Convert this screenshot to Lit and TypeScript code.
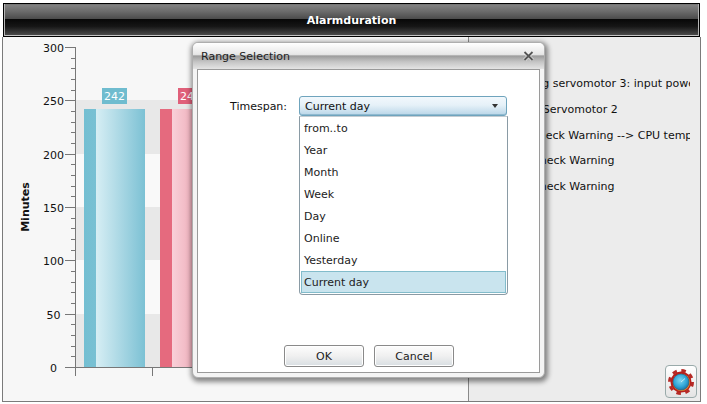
import { LitElement, html, css, svg } from "lit";
import { customElement } from "lit/decorators.js";

const items = ["from..to", "Year", "Month", "Week", "Day", "Online", "Yesterday", "Current day"];
const rows = [
  { text: "Warning servomotor 3: input power", indent: 10 },
  { text: "Warning Servomotor 2", indent: 0 },
  { text: "Check Warning --> CPU temperature", indent: 37 },
  { text: "Check Warning", indent: 38 },
  { text: "Check Warning", indent: 38 },
];
const y0 = 367;
const unit = 320 / 300;
const yOf = (v: number) => y0 - v * unit;

@customElement("app-root")
export class AppRoot extends LitElement {
  static styles = css`
    :host { display: block; position: relative; width: 707px; height: 404px; background: #fff; overflow: hidden; font-family: "DejaVu Sans", Verdana, sans-serif; font-size: 11px; color: #111; }
    .frame { display: flex; flex-direction: column; width: 699px; height: 399px; margin: 3px 0 0 2px; }
    .header { height: 34px; margin-left: 1px; width: 697px; box-sizing: border-box; border: 1px solid #000; box-shadow: inset 1px 0 0 #b4b4b4, inset -1px 0 0 #b4b4b4, inset 0 -1px 0 #c4c4c4, inset 0 1px 0 #777;
      background: linear-gradient(#858585 0, #6a6a6a 24%, #4c4c4c 46%, #080808 48%, #161616 70%, #505050 100%);
      display: flex; align-items: center; justify-content: center; color: #fff; font-weight: bold; font-size: 11px; flex: none; }
    .body { flex: 1; display: flex; border: 1px solid #7b7b7b; border-top: 0; min-height: 0; }
    .chart { width: 465px; background: #f7f7f7; border-right: 1px solid #8a8a8a; }
    .chart svg { display: block; }
    .chart text { font-family: "DejaVu Sans", Verdana, sans-serif; font-size: 11px; fill: #111; }
    .chart .lbl { fill: #fff; font-size: 11px; }
    .chart .axt { font-weight: bold; }
    .side { flex: 1; min-width: 0; background: #ececec; padding: 34px 10px 0 0; position: relative; }
    .side-list { margin-left: 25px; overflow: hidden; }
    .side-row { height: 25.75px; line-height: 25.75px; white-space: nowrap; font-size: 11px; color: #111; }
    .gear { position: absolute; right: 3px; bottom: 3px; width: 30px; height: 31px; border: 1px solid #9aa; border-radius: 4px; background: linear-gradient(#fff, #e4e4e4); display: flex; align-items: center; justify-content: center; }
    .dialog { position: absolute; left: 192px; top: 42px; width: 353px; height: 336px; box-sizing: border-box; display: flex; flex-direction: column;
      border: 1px solid #aeaeae; border-radius: 6px; padding: 0 4px 4px; background: #f4f4f4;
      box-shadow: 1px 2px 5px 2px rgba(0,0,0,.45); }
    .title { height: 26px; flex: none; margin: 0 -4px; padding: 0 10px 0 8px; display: flex; justify-content: space-between; align-items: center; color: #222; font-size: 11px;
      background: linear-gradient(#fff 0, #e6e6e6 44%, #9c9c9c 50%, #c4c4c4 72%, #e4e4e4 100%); border-radius: 5px 5px 0 0; }
    .close { display: block; }
    .content { flex: 1; background: #fff; border: 1px solid #9a9a9a; position: relative; display: flex; flex-direction: column; justify-content: space-between; padding: 26px 0 5px; min-height: 0; }
    .field { display: flex; align-items: center; gap: 12px; margin-left: 32px; height: 20px; }
    .combo { width: 208px; height: 20px; box-sizing: border-box; border: 1px solid #6fa4bd; border-radius: 3px; background: linear-gradient(#f2f8fc, #e6f1f8 45%, #b9d6e8); display: flex; align-items: center; justify-content: space-between; padding: 0 8px 0 5px; box-shadow: inset 0 -1px 0 #8fb9d0; color: #111; }
    .arrow { width: 0; height: 0; border: 3.5px solid transparent; border-top: 4px solid #333; border-bottom: 0; }
    .menu { position: absolute; left: 101px; top: 46px; width: 209px; height: 179px; box-sizing: border-box; border: 1px solid #8a9ba5; border-top-color: #c4ccd2; border-radius: 0 0 4px 4px; background: #fff; padding: 1px; }
    .item { height: 22px; line-height: 22px; padding-left: 3px; color: #222; box-sizing: border-box; }
    .item.sel { background: #c9e4ee; border: 1px solid #82bccb; line-height: 22px; padding-left: 2px; margin-top: -1px; }
    .buttons { display: flex; justify-content: flex-start; gap: 10px; margin-left: 86px; }
    .btn { width: 80px; height: 22px; box-sizing: border-box; border: 1px solid #8a8a8a; border-radius: 3px; background: linear-gradient(#fdfdfd, #f0f0f0 50%, #d8dee2); box-shadow: inset 0 0 0 1px #fff; display: flex; align-items: center; justify-content: center; color: #222; }
  `;

  private chart() {
    const bands = [[250, 200], [150, 100], [50, 0]];
    const white = [[200, 150], [100, 50]];
    const ticks = [];
    for (let v = 0; v <= 300; v += 10) {
      const major = v % 50 === 0;
      const y = Math.round(yOf(v)) + 0.5;
      ticks.push(svg`<line x1=${major ? 65 : 71} x2="75" y1=${y} y2=${y} stroke="#777"></line>`);
      if (major) ticks.push(svg`<text x="53.5" y=${y + 4} text-anchor="middle">${v}</text>`);
    }
    const rect = (a: number, b: number, fill: string) => {
      const top = Math.round(yOf(a));
      return svg`<rect x="76" width="392" y=${top} height=${Math.round(yOf(b)) - top} fill=${fill}></rect>`;
    };
    return html`<svg width="465" height="365" viewBox="0 0 465 365">
      <defs>
        <linearGradient id="b" x1="0" x2="1" y1="0" y2="0">
          <stop offset="0" stop-color="#74bfd2"></stop><stop offset=".195" stop-color="#78c0d3"></stop>
          <stop offset=".2" stop-color="#d6eef4"></stop><stop offset=".5" stop-color="#b5dde8"></stop><stop offset="1" stop-color="#7cc1d4"></stop>
        </linearGradient>
        <linearGradient id="r" x1="0" x2="1" y1="0" y2="0">
          <stop offset="0" stop-color="#e56a7e"></stop><stop offset=".195" stop-color="#e56a7e"></stop>
          <stop offset=".2" stop-color="#f9d0d8"></stop><stop offset=".5" stop-color="#f0b4c0"></stop><stop offset="1" stop-color="#e88"></stop>
        </linearGradient>
      </defs>
      <g transform="translate(-3,-37)">
        ${bands.map(([a, b]) => rect(a, b, "#e8e8e8"))}
        ${white.map(([a, b]) => rect(a, b, "#f9f9f9"))}
        <rect x="84" y="109" width="61" height="258" fill="url(#b)"></rect>
        <rect x="160" y="109" width="61" height="258" fill="url(#r)"></rect>
        <rect x="102" y="88" width="25" height="16" fill="#6fbccf"></rect>
        <text class="lbl" x="114.5" y="100" text-anchor="middle">242</text>
        <rect x="178" y="88" width="25" height="16" fill="#e0607a"></rect>
        <text class="lbl" x="190.5" y="100" text-anchor="middle">242</text>
        ${ticks}
        <line x1="75.5" x2="75.5" y1="47" y2="376" stroke="#777"></line>
        <line x1="76" x2="468" y1="367.5" y2="367.5" stroke="#777"></line>
        <line x1="152.5" x2="152.5" y1="367" y2="376" stroke="#777"></line>
        <text class="axt" transform="translate(29,207) rotate(-90)" text-anchor="middle">Minutes</text>
      </g>
    </svg>`;
  }

  render() {
    return html`
      <div class="frame">
        <div class="header">Alarmduration</div>
        <div class="body">
          <div class="chart">${this.chart()}</div>
          <div class="side">
            <div class="side-list">
              ${rows.map((r) => html`<div class="side-row" style="margin-left:${r.indent}px">${r.text}</div>`)}
            </div>
            <div class="gear">
              <svg width="28" height="28" viewBox="0 0 28 28">
                <defs>
                  <radialGradient id="g" cx=".45" cy=".4" r=".65"><stop offset="0" stop-color="#7fd6ef"></stop><stop offset=".6" stop-color="#30a6d8"></stop><stop offset="1" stop-color="#1a6c9c"></stop></radialGradient>
                </defs>
                <circle cx="14" cy="14" r="10.5" fill="#b81f1c"></circle>
                <circle cx="14" cy="14" r="11.5" fill="none" stroke="#b52a26" stroke-width="3" stroke-dasharray="4.5 4.53"></circle>
                <circle cx="14.4" cy="14.4" r="8.6" fill="#e08a2a"></circle>
                <circle cx="14" cy="14" r="8" fill="url(#g)" stroke="#1a5f8c" stroke-width=".6"></circle>
                <path d="M14 14 L18 10.5" fill="none" stroke="#cdeef8" stroke-width=".9"></path>
              </svg>
            </div>
          </div>
        </div>
      </div>
      <div class="dialog">
        <div class="title"><span>Range Selection</span>
          <svg class="close" width="11" height="10" viewBox="0 0 11 10">
            <path d="M1.5 1 L9.5 9 M9.5 1 L1.5 9" stroke="#fff" stroke-width="3.4" opacity=".7"></path>
            <path d="M1.5 1 L9.5 9 M9.5 1 L1.5 9" stroke="#555" stroke-width="1.9"></path>
          </svg>
        </div>
        <div class="content">
          <div class="field"><span>Timespan:</span>
            <div class="combo"><span>Current day</span><span class="arrow"></span></div>
          </div>
          <div class="buttons"><div class="btn">OK</div><div class="btn">Cancel</div></div>
          <div class="menu">
            ${items.map((i, n) => html`<div class="item ${n === items.length - 1 ? "sel" : ""}">${i}</div>`)}
          </div>
        </div>
      </div>
    `;
  }
}
